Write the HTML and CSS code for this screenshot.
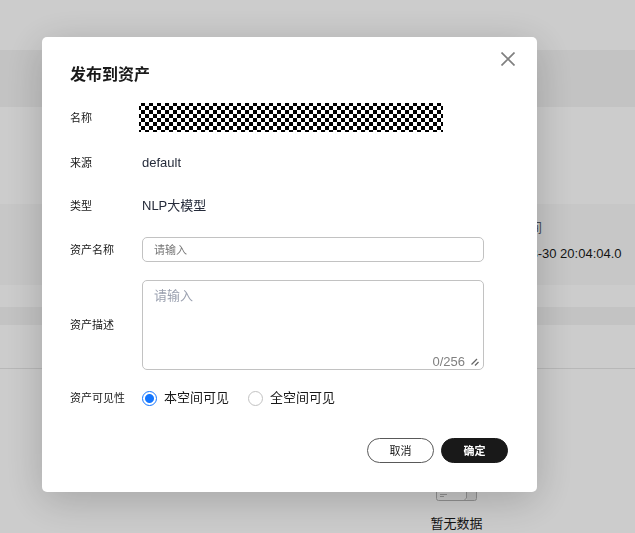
FILE: index.html
```html
<!doctype html>
<html lang="zh-CN">
  <head>
    <meta charset="UTF-8" />
    <meta name="viewport" content="width=device-width, initial-scale=1.0" />
    <title>发布到资产</title>
    <link rel="stylesheet" href="styles.css">
  </head>
  <body>
    <main class="page">
      <div class="topbar"></div>
      <div class="band"></div>
      <section class="summary">
        <div class="info">
          <span class="info-label">创建时间</span>
          <span>2024-08-30 20:04:04.0</span>
        </div>
      </section>
      <div class="band band-thin"></div>
      <div class="tabs"></div>
      <section class="empty">
        <svg class="empty-icon" width="42" height="38" viewBox="0 0 42 38" fill="none" stroke="#b4b4b4">
          <path d="M.5 .5h30v37h-28a2 2 0 0 1-2-2z" fill="#fafafa" stroke="none" />
          <path d="M31 13h9v24h-9z" fill="#ececec" stroke="none" />
          <path d="M.5 0v35.500a2 2 0 0 0 2 2h36a2 2 0 0 0 2-2v-23M30.500 13v22l-2 2" />
          <path d="M4 31.500h7M4 33.500h4" />
        </svg>
        <p>暂无数据</p>
      </section>
    </main>

    <div class="overlay">
      <form class="dialog" role="dialog" aria-labelledby="dialogTitle">
        <button type="button" class="close" aria-label="关闭">
          <svg width="14" height="14" viewBox="0 0 14 14" fill="none" stroke="#808080" stroke-width="1.700">
            <path d="M.5 .5l13 13M13.500 .5l-13 13" />
          </svg>
        </button>
        <h1 id="dialogTitle">发布到资产</h1>

        <div class="fields">
          <div class="row row-name">
            <span class="label">名称</span>
            <span class="masked"></span>
          </div>
          <div class="row row-text">
            <span class="label">来源</span>
            <span class="value">default</span>
          </div>
          <div class="row row-text">
            <span class="label">类型</span>
            <span class="value">NLP大模型</span>
          </div>
          <div class="row">
            <label class="label" for="assetName">资产名称</label>
            <input type="text" id="assetName" class="input" placeholder="请输入" />
          </div>
          <div class="row">
            <label class="label" for="assetDesc">资产描述</label>
            <div class="textarea-wrap">
              <textarea id="assetDesc" class="input textarea" maxlength="256" placeholder="请输入"></textarea>
              <div class="counter">
                <span>0/256</span>
                <svg width="8" height="8" viewBox="0 0 8 8" fill="none" stroke="#666" stroke-width="1.300">
                  <path d="M.5 6.500l5.500-5.500M4 7.500l3.500-3.500" />
                </svg>
              </div>
            </div>
          </div>
          <div class="row row-radio" role="radiogroup" aria-labelledby="visibilityLabel">
            <span class="label" id="visibilityLabel">资产可见性</span>
            <div class="radios">
              <label class="radio"><input type="radio" name="visibility" checked />本空间可见</label>
              <label class="radio"><input type="radio" name="visibility" />全空间可见</label>
            </div>
          </div>
        </div>

        <div class="actions">
          <button type="button" class="btn">取消</button>
          <button type="submit" class="btn btn-primary">确定</button>
        </div>
      </form>
    </div>
  </body>
</html>
```
FILE: styles.css
```css
* {
  box-sizing: border-box;
}
body {
  margin: 0;
  font-family: "Liberation Sans", "Noto Sans CJK SC", sans-serif;
  font-size: 13px;
  line-height: 20px;
  color: #191919;
  background-color: #fff;
}

/* page behind the dialog */
.page {
  height: 100vh;
  overflow: hidden;
}
.topbar {
  height: 50px;
}
.band {
  height: 57px;
  background-color: #f4f4f4;
}
.band-thin {
  height: 18px;
}
.summary {
  padding: 97px 0 22px;
}
.info {
  display: flex;
  flex-direction: column;
  gap: 6px;
  padding: 14px 15px 21px 490px;
  white-space: nowrap;
  background-color: #f9f9f9;
}
.info-label {
  color: #575d6c;
}
.tabs {
  height: 44px;
  border-bottom: 1px solid #e6e6e6;
}
.empty {
  display: flex;
  flex-direction: column;
  align-items: center;
  margin-left: 278px;
  padding-top: 94px;
}
.empty p {
  margin: 13px 0 0;
}

/* dialog */
.overlay {
  position: fixed;
  inset: 0;
  padding: 37px 98px 37px 42px;
  background-color: rgba(0, 0, 0, 0.2);
}
.dialog {
  position: relative;
  padding: 26px 29px 29px 28px;
  border-radius: 5px;
  background-color: #fff;
  box-shadow: 0 8px 40px rgba(0, 0, 0, 0.2);
}
.dialog h1 {
  margin: 0 0 16px;
  font-size: 16px;
  line-height: 24px;
  font-weight: bold;
}
.close {
  position: absolute;
  top: 12px;
  right: 19px;
  display: flex;
  align-items: center;
  justify-content: center;
  width: 20px;
  height: 20px;
  padding: 0;
  border: none;
  background: none;
  cursor: pointer;
}
.fields {
  display: flex;
  flex-direction: column;
  gap: 18px;
  padding-right: 24px;
}
.row {
  display: grid;
  grid-template-columns: 72px 1fr;
  align-items: center;
  min-height: 25px;
}
.row-name {
  min-height: 30px;
}
.row-text {
  padding-bottom: 2px;
}
.row-radio {
  min-height: 20px;
}
.label {
  font-size: 11px;
}
.value {
  color: #252b3a;
}
.masked {
  align-self: start;
  height: 29px;
  margin: 0 41px 0 -3px;
  background: conic-gradient(#000 25%, #fff 0 50%, #000 0 75%, #fff 0) -2px -1px / 8px 8px;
}
.input {
  display: block;
  width: 100%;
  height: 25px;
  padding: 0 11px;
  border: 1px solid #c2c2c2;
  border-radius: 5px;
  font-family: inherit;
  font-size: 11px;
  color: #191919;
  background-color: #fff;
  outline: none;
}
.input::placeholder {
  color: #777;
}
.input:focus {
  border-color: #191919;
}
.textarea-wrap {
  position: relative;
}
.textarea {
  height: 90px;
  padding: 5px 11px;
  font-size: 13px;
  line-height: 20px;
  resize: none;
}
.textarea::placeholder {
  color: #9ba1b0;
}
.counter {
  position: absolute;
  right: 5px;
  bottom: 0;
  display: flex;
  align-items: center;
  gap: 6px;
  line-height: 16px;
  color: #808080;
}
.radios {
  display: flex;
  gap: 19px;
}
.radio {
  display: flex;
  align-items: center;
  gap: 7px;
}
.radio input {
  appearance: none;
  width: 15px;
  height: 15px;
  margin: 0;
  border: 1px solid #c2c2c2;
  border-radius: 50%;
  background-color: #fff;
}
.radio input:checked {
  border-color: #1476ff;
  background: radial-gradient(circle, #1476ff 4px, #fff 5px);
}
.actions {
  display: flex;
  justify-content: flex-end;
  gap: 7px;
  margin-top: 30px;
}
.btn {
  width: 67px;
  height: 25px;
  padding: 0 0 2px;
  border: 1px solid #595959;
  border-radius: 13px;
  font-family: inherit;
  font-size: 11px;
  color: #191919;
  background-color: #fff;
  cursor: pointer;
}
.btn-primary {
  border-color: #191919;
  font-weight: bold;
  color: #fff;
  background-color: #191919;
}
```
